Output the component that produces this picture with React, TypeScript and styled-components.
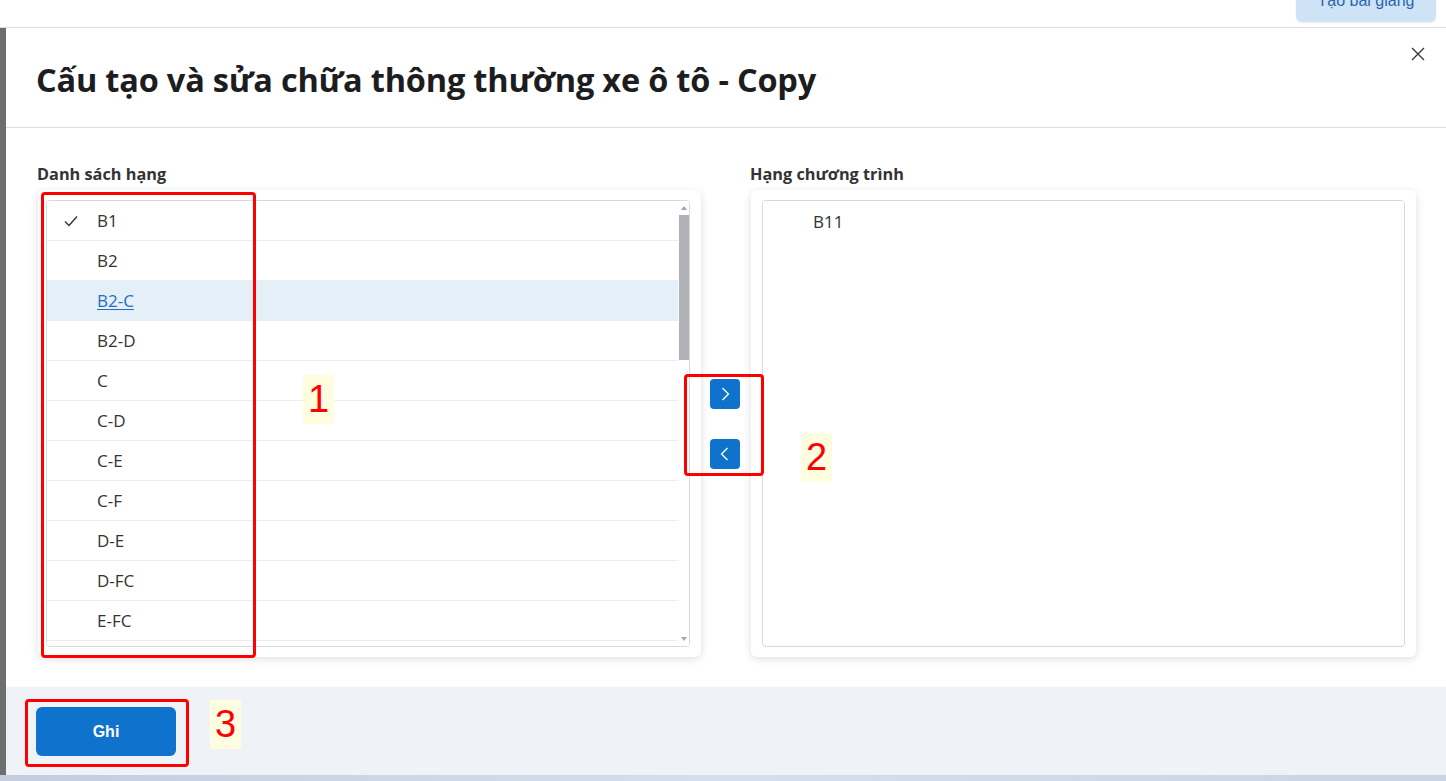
import React from 'react'
import styled, { createGlobalStyle } from 'styled-components'

const GlobalStyle = createGlobalStyle`
  html, body {
    margin: 0;
    padding: 0;
    background: #fff;
    font-family: "Open Sans", "Noto Sans", sans-serif;
    color: #333;
  }
  * { box-sizing: border-box; }
`

const blue = '#0f72cd'

const Page = styled.div`
  position: relative;
  width: 1446px;
  height: 781px;
  overflow: hidden;
  display: flex;
  flex-direction: column;
`

const TopBar = styled.div`
  height: 28px;
  flex-shrink: 0;
  border-bottom: 1px solid #dcdcdc;
  display: flex;
  justify-content: flex-end;
  padding-right: 10px;
  overflow: hidden;
`

const TopButton = styled.button`
  margin-top: -20px;
  height: 42px;
  width: 140px;
  border: none;
  border-radius: 6px;
  background: #cfe3f6;
  color: #2867ab;
  font-family: "Liberation Sans", Arial, sans-serif;
  font-size: 16px;
  box-shadow: 0 1px 2px rgba(0, 0, 0, 0.08);
`

const Main = styled.div`
  flex: 1;
  display: flex;
  min-height: 0;
`

const BackStrip = styled.div`
  width: 6px;
  background: #6e6e6e;
`

const Modal = styled.div`
  flex: 1;
  display: flex;
  flex-direction: column;
  background: #fff;
`

const Header = styled.div`
  height: 100px;
  flex-shrink: 0;
  border-bottom: 1px solid #dcdde2;
  display: flex;
  align-items: center;
  justify-content: space-between;
  padding: 4px 18px 0 30px;
`

const Title = styled.h1`
  margin: 0;
  font-size: 32.5px;
  font-weight: 700;
  color: #1d1d1f;
  letter-spacing: -0.2px;
`

const CloseButton = styled.button`
  align-self: flex-start;
  margin-top: 12px;
  width: 20px;
  height: 20px;
  padding: 0;
  border: none;
  background: none;
  display: flex;
  align-items: center;
  justify-content: center;
  color: #333;
`

const Body = styled.div`
  flex: 1;
  min-height: 0;
  padding: 36px 30px 30px 32px;
  display: grid;
  grid-template-columns: 663px 50px 1fr;
  grid-template-rows: auto 1fr;
  row-gap: 6px;
`

const Label = styled.div`
  font-size: 16.3px;
  font-weight: 700;
  color: #333;
  line-height: 20px;
  margin-left: -1px;
`

const Card = styled.div<{ $left?: number }>`
  background: #fff;
  border-radius: 6px;
  box-shadow: 0 2px 8px rgba(0, 0, 0, 0.13);
  padding: 10px 11px 10px ${(p) => p.$left ?? 8}px;
  display: flex;
  min-height: 0;
`

const ListBox = styled.div`
  flex: 1;
  border: 1px solid #d9d9dc;
  border-radius: 4px;
  overflow: hidden;
  display: flex;
`

const Rows = styled.div`
  flex: 1;
  overflow: hidden;
`

const Scrollbar = styled.div`
  width: 11px;
  display: flex;
  flex-direction: column;
  align-items: stretch;
  background: #fff;
`

const ScrollArrow = styled.div`
  height: 14px;
  display: flex;
  align-items: center;
  justify-content: center;
  color: #a5a5a8;
`

const ScrollTrack = styled.div`
  flex: 1;
  display: flex;
  flex-direction: column;
`

const ScrollThumb = styled.div`
  height: 145px;
  margin-left: 1px;
  background: #b1b2b8;
`

const Row = styled.div<{ $active?: boolean; $plain?: boolean }>`
  height: 40px;
  display: flex;
  align-items: center;
  position: relative;
  padding-left: 50px;
  font-size: 17px;
  color: ${(p) => (p.$active ? '#1f6fbf' : '#333')};
  text-decoration: ${(p) => (p.$active ? 'underline' : 'none')};
  text-underline-offset: 2px;
  background: ${(p) => (p.$active ? '#e5eff8' : '#fff')};
  border-bottom: ${(p) => (p.$plain ? 'none' : '1px solid #ededed')};
`

const Check = styled.span`
  position: absolute;
  left: 17px;
  top: 14px;
  display: flex;
  color: #333;
`

const Middle = styled.div`
  display: flex;
  flex-direction: column;
  align-items: center;
  justify-content: center;
  gap: 30px;
  padding-right: 2px;
`

const ArrowButton = styled.button`
  width: 30px;
  height: 30px;
  border: none;
  border-radius: 4px;
  background: ${blue};
  color: #fff;
  display: flex;
  align-items: center;
  justify-content: center;
  padding: 0;
`

const Footer = styled.div`
  height: 88px;
  flex-shrink: 0;
  background: #eff3f8;
  padding: 20px 30px;
`

const SaveButton = styled.button`
  width: 140px;
  height: 49px;
  border: none;
  border-radius: 6px;
  background: ${blue};
  color: #fff;
  font-family: "Liberation Sans", Arial, sans-serif;
  font-weight: 700;
  font-size: 16px;
`

const BottomStrip = styled.div`
  height: 6px;
  flex-shrink: 0;
  background: linear-gradient(90deg, #c4cde0, #d4deec 50%, #c9d3e4);
`

const Mark = styled.div<{ $x: number; $y: number; $w: number; $h: number }>`
  position: absolute;
  left: ${(p) => p.$x}px;
  top: ${(p) => p.$y}px;
  width: ${(p) => p.$w}px;
  height: ${(p) => p.$h}px;
  border: 3px solid #ff0000;
  border-radius: 4px;
  pointer-events: none;
`

const Num = styled.div<{ $x: number; $y: number }>`
  position: absolute;
  left: ${(p) => p.$x}px;
  top: ${(p) => p.$y}px;
  width: 31px;
  height: 49px;
  background: #fffde0;
  color: #ff0000;
  font-family: "Liberation Sans", Arial, sans-serif;
  font-size: 38px;
  line-height: 49px;
  text-align: center;
`

const ranks = [
  'B1', 'B2', 'B2-C', 'B2-D', 'C', 'C-D', 'C-E', 'C-F', 'D-E', 'D-FC', 'E-FC',
  'FB2', 'FC', 'FD', 'FE', 'A1', 'A2', 'A3', 'A4', 'B12', 'D', 'E', 'F',
]

const Chevron = ({ dir }: { dir: 'left' | 'right' }) => (
  <svg width="12" height="16" viewBox="0 0 12 16" fill="none" stroke="currentColor" strokeWidth="1.3">
    {dir === 'right' ? <path d="M3.5 2l6 6-6 6" /> : <path d="M8.5 2l-6 6 6 6" />}
  </svg>
)

const Triangle = ({ up }: { up?: boolean }) => (
  <svg width="6" height="4" viewBox="0 0 6 4" fill="currentColor">
    {up ? <path d="M0 4L3 0L6 4Z" /> : <path d="M0 0L3 4L6 0Z" />}
  </svg>
)

export default function App() {
  return (
    <Page>
      <GlobalStyle />
      <TopBar>
        <TopButton>Tạo bài giảng</TopButton>
      </TopBar>
      <Main>
        <BackStrip />
        <Modal>
          <Header>
            <Title>Cấu tạo và sửa chữa thông thường xe ô tô - Copy</Title>
            <CloseButton aria-label="Đóng">
              <svg width="14" height="14" viewBox="0 0 14 14" stroke="currentColor" strokeWidth="1.3">
                <path d="M1 1l12 12M13 1L1 13" />
              </svg>
            </CloseButton>
          </Header>
          <Body>
            <Label>Danh sách hạng</Label>
            <div />
            <Label>Hạng chương trình</Label>
            <Card>
              <ListBox>
                <Rows>
                  {ranks.map((r, i) => (
                    <Row key={r} $active={r === 'B2-C'}>
                      {i === 0 && (
                        <Check>
                          <svg width="14" height="12" viewBox="0 0 14 12" fill="none" stroke="currentColor" strokeWidth="1.4">
                            <path d="M1 6.5l4 4L13 1.5" />
                          </svg>
                        </Check>
                      )}
                      {r}
                    </Row>
                  ))}
                </Rows>
                <Scrollbar>
                  <ScrollArrow>
                    <Triangle up />
                  </ScrollArrow>
                  <ScrollTrack>
                    <ScrollThumb />
                  </ScrollTrack>
                  <ScrollArrow>
                    <Triangle />
                  </ScrollArrow>
                </Scrollbar>
              </ListBox>
            </Card>
            <Middle>
              <ArrowButton aria-label="Thêm">
                <Chevron dir="right" />
              </ArrowButton>
              <ArrowButton aria-label="Bớt">
                <Chevron dir="left" />
              </ArrowButton>
            </Middle>
            <Card $left={11}>
              <ListBox>
                <Rows>
                  <Row $plain>B11</Row>
                </Rows>
              </ListBox>
            </Card>
          </Body>
          <Footer>
            <SaveButton>Ghi</SaveButton>
          </Footer>
        </Modal>
      </Main>
      <BottomStrip />

      <Mark $x={41} $y={192} $w={215} $h={466} />
      <Num $x={303} $y={375}>1</Num>
      <Mark $x={684} $y={374} $w={80} $h={102} />
      <Num $x={801} $y={433}>2</Num>
      <Mark $x={25} $y={699} $w={164} $h={68} />
      <Num $x={210} $y={700}>3</Num>
    </Page>
  )
}
